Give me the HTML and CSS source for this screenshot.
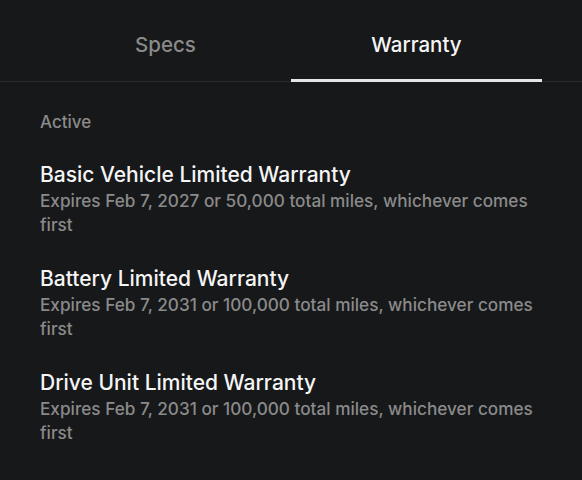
FILE: index.html
```html
<!DOCTYPE html>
<html>
<head>
<meta charset="utf-8">
<link rel="stylesheet" href="styles.css">
</head>
<body>
<div class="tabs">
  <div class="tab">Specs</div>
  <div class="tab active">Warranty</div>
</div>
<div class="content">
  <div class="section-label">Active</div>
  <div class="item">
    <div class="item-title">Basic Vehicle Limited Warranty</div>
    <div class="item-sub">Expires Feb 7, 2027 or 50,000 total miles, whichever comes first</div>
  </div>
  <div class="item">
    <div class="item-title">Battery Limited Warranty</div>
    <div class="item-sub">Expires Feb 7, 2031 or 100,000 total miles, whichever comes first</div>
  </div>
  <div class="item">
    <div class="item-title">Drive Unit Limited Warranty</div>
    <div class="item-sub">Expires Feb 7, 2031 or 100,000 total miles, whichever comes first</div>
  </div>
</div>
</body>
</html>
```
FILE: styles.css
```css
html, body {
  margin: 0;
  padding: 0;
  background: #17181a;
  font-family: Inter, "Noto Sans", sans-serif;
  color: #f2f2f2;
}
.tabs {
  display: flex;
  padding: 0 40px;
  border-bottom: 1px solid #2b2c2e;
}
.tab {
  flex: 1;
  height: 81px;
  display: flex;
  align-items: center;
  justify-content: center;
  font-size: 20.5px;
  font-weight: 500;
  color: #8a8a8a;
  position: relative;
  padding-top: 8px;
  box-sizing: border-box;
}
.tab.active {
  color: #f5f5f5;
}
.tab.active::after {
  content: "";
  position: absolute;
  left: 0;
  right: 0;
  bottom: -1px;
  height: 3px;
  background: #e6e6e6;
}
.content {
  padding: 29px 40px 0 40px;
}
.section-label {
  font-size: 17px;
  font-weight: 500;
  color: #8a8a8a;
  line-height: 22px;
  margin-bottom: 28px;
}
.item {
  margin-bottom: 28px;
}
.item-title {
  font-size: 21px;
  font-weight: 500;
  line-height: 28px;
  color: #f5f5f5;
}
.item-sub {
  font-size: 17.2px;
  font-weight: 500;
  line-height: 24px;
  color: #8a8a8a;
}
```
